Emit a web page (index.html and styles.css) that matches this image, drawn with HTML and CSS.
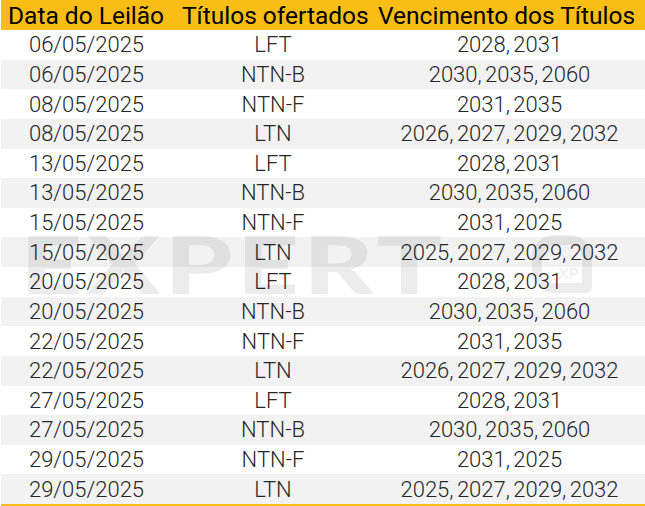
FILE: index.html
```html
<!DOCTYPE html>
<html lang="pt-BR">
<head>
<meta charset="utf-8">
<title>Leilões</title>
<link rel="stylesheet" href="styles.css">
</head>
<body>
<div class="sheet">
  <div class="head">
    <div class="hcell">Data do Leilão</div>
    <div class="hcell">Títulos ofertados</div>
    <div class="hcell">Vencimento dos Títulos</div>
  </div>
  <div class="body">
    <div class="row"><span>06/05/2025</span><span>LFT</span><span>2028, 2031</span></div>
    <div class="row alt"><span>06/05/2025</span><span>NTN-B</span><span>2030, 2035, 2060</span></div>
    <div class="row"><span>08/05/2025</span><span>NTN-F</span><span>2031, 2035</span></div>
    <div class="row alt"><span>08/05/2025</span><span>LTN</span><span>2026, 2027, 2029, 2032</span></div>
    <div class="row"><span>13/05/2025</span><span>LFT</span><span>2028, 2031</span></div>
    <div class="row alt"><span>13/05/2025</span><span>NTN-B</span><span>2030, 2035, 2060</span></div>
    <div class="row"><span>15/05/2025</span><span>NTN-F</span><span>2031, 2025</span></div>
    <div class="row alt"><span>15/05/2025</span><span>LTN</span><span>2025, 2027, 2029, 2032</span></div>
    <div class="row"><span>20/05/2025</span><span>LFT</span><span>2028, 2031</span></div>
    <div class="row alt"><span>20/05/2025</span><span>NTN-B</span><span>2030, 2035, 2060</span></div>
    <div class="row"><span>22/05/2025</span><span>NTN-F</span><span>2031, 2035</span></div>
    <div class="row alt"><span>22/05/2025</span><span>LTN</span><span>2026, 2027, 2029, 2032</span></div>
    <div class="row"><span>27/05/2025</span><span>LFT</span><span>2028, 2031</span></div>
    <div class="row alt"><span>27/05/2025</span><span>NTN-B</span><span>2030, 2035, 2060</span></div>
    <div class="row"><span>29/05/2025</span><span>NTN-F</span><span>2031, 2025</span></div>
    <div class="row alt"><span>29/05/2025</span><span>LTN</span><span>2025, 2027, 2029, 2032</span></div>
  </div>
  <div class="watermark" aria-hidden="true">
    <span class="wm-text">EXPERT</span>
    <span class="wm-logo">XP</span>
  </div>
</div>
</body>
</html>
```
FILE: styles.css
```css
html, body {
  margin: 0;
  padding: 0;
  background: #ffffff;
}
.sheet {
  position: relative;
  width: 645px;
  height: 506px;
  font-family: Roboto, "Liberation Sans", sans-serif;
  overflow: hidden;
}
.head {
  display: grid;
  grid-template-columns: 174px 196px 1fr;
  height: 30px;
  margin-left: 1px;
  background: #f9bd14;
  color: #000;
  font-size: 24.5px;
  font-weight: 400;
  line-height: 31px;
}
.hcell {
  padding-left: 7px;
  white-space: nowrap;
}
.body {
  display: grid;
  grid-auto-rows: 29.625px;
  margin-left: 1px;
  border-bottom: 2px solid #f9bd14;
}
.row {
  display: grid;
  grid-template-columns: 171px 202px 1fr;
  align-items: center;
  font-size: 22px;
  font-weight: 300;
  color: #262626;
  line-height: 29px;
  text-align: center;
  white-space: nowrap;
  word-spacing: -2px;
}
.row.alt {
  background: #f2f2f2;
}
.watermark {
  position: absolute;
  left: 20px;
  top: 233px;
  width: 572px;
  height: 60px;
  pointer-events: none;
  color: rgba(0, 0, 0, 0.075);
}
.wm-text {
  position: absolute;
  left: 0;
  top: -10px;
  display: block;
  font-family: Lato, "Liberation Sans", sans-serif;
  font-weight: 900;
  font-size: 80px;
  letter-spacing: 3px;
  line-height: 80px;
  transform: scaleX(1.36);
  transform-origin: left center;
}
.wm-logo {
  position: absolute;
  right: 0;
  top: 2px;
  display: flex;
  align-items: flex-end;
  justify-content: flex-end;
  width: 60px;
  height: 58px;
  padding: 0 4px 2px 0;
  border-radius: 22px 22px 6px 22px;
  border: 10px solid rgba(0, 0, 0, 0.075);
  box-sizing: border-box;
  font-family: Lato, sans-serif;
  font-weight: 900;
  font-size: 15px;
  line-height: 15px;
}
```
